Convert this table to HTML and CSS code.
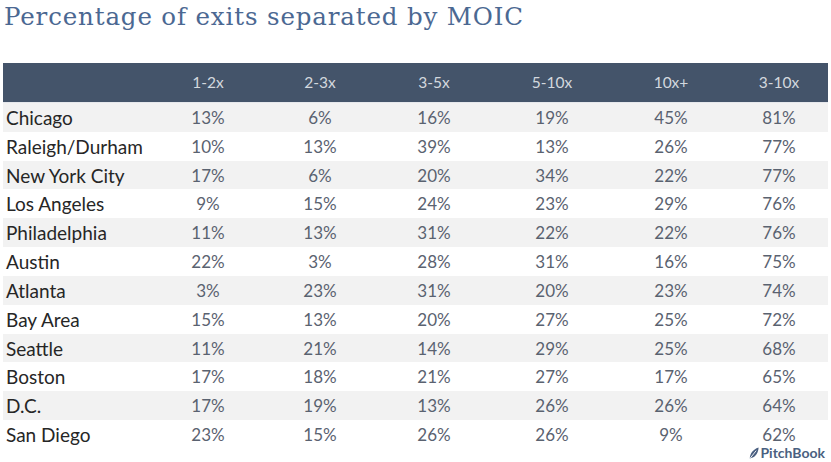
FILE: index.html
```html
<!DOCTYPE html>
<html>
<head>
<meta charset="utf-8">
<link rel="stylesheet" href="styles.css">
</head>
<body>
<div class="page">
  <h1 class="title">Percentage of exits separated by MOIC</h1>
  <div class="table">
    <div class="row head">
      <div class="city"></div><div>1-2x</div><div>2-3x</div><div>3-5x</div><div>5-10x</div><div>10x+</div><div>3-10x</div>
    </div>
    <div class="row odd"><div class="city">Chicago</div><div>13%</div><div>6%</div><div>16%</div><div>19%</div><div>45%</div><div>81%</div></div>
    <div class="row"><div class="city">Raleigh/Durham</div><div>10%</div><div>13%</div><div>39%</div><div>13%</div><div>26%</div><div>77%</div></div>
    <div class="row odd"><div class="city">New York City</div><div>17%</div><div>6%</div><div>20%</div><div>34%</div><div>22%</div><div>77%</div></div>
    <div class="row"><div class="city">Los Angeles</div><div>9%</div><div>15%</div><div>24%</div><div>23%</div><div>29%</div><div>76%</div></div>
    <div class="row odd"><div class="city">Philadelphia</div><div>11%</div><div>13%</div><div>31%</div><div>22%</div><div>22%</div><div>76%</div></div>
    <div class="row"><div class="city">Austin</div><div>22%</div><div>3%</div><div>28%</div><div>31%</div><div>16%</div><div>75%</div></div>
    <div class="row odd"><div class="city">Atlanta</div><div>3%</div><div>23%</div><div>31%</div><div>20%</div><div>23%</div><div>74%</div></div>
    <div class="row"><div class="city">Bay Area</div><div>15%</div><div>13%</div><div>20%</div><div>27%</div><div>25%</div><div>72%</div></div>
    <div class="row odd"><div class="city">Seattle</div><div>11%</div><div>21%</div><div>14%</div><div>29%</div><div>25%</div><div>68%</div></div>
    <div class="row"><div class="city">Boston</div><div>17%</div><div>18%</div><div>21%</div><div>27%</div><div>17%</div><div>65%</div></div>
    <div class="row odd"><div class="city">D.C.</div><div>17%</div><div>19%</div><div>13%</div><div>26%</div><div>26%</div><div>64%</div></div>
    <div class="row"><div class="city">San Diego</div><div>23%</div><div>15%</div><div>26%</div><div>26%</div><div>9%</div><div>62%</div></div>
  </div>
  <div class="brand">
    <svg class="leaf" width="10" height="12" viewBox="0 0 10 12"><path d="M0.8 11.5 C1 7 3.5 2.5 9.6 0.5 C9.4 5.5 6.8 10 2.2 11 Z" fill="#4a5f80"/><path d="M1.2 11.2 L7.2 3.6" stroke="#fff" stroke-width="0.9"/></svg>
    <span>PitchBook</span>
  </div>
</div>
</body>
</html>
```

FILE: styles.css
```css
html, body {
  margin: 0;
  padding: 0;
  background: #ffffff;
}
.page {
  width: 831px;
  height: 462px;
  overflow: hidden;
}
.title {
  margin: 0;
  padding: 0 0 0 4px;
  height: 63px;
  font-family: "DejaVu Serif", "Liberation Serif", serif;
  font-weight: normal;
  font-size: 24.5px;
  line-height: 33px;
  color: #4b6892;
  letter-spacing: 0.85px;
  white-space: nowrap;
}
.table {
  margin-left: 3px;
  width: 825px;
  font-family: Lato, "Noto Sans", sans-serif;
}
.row {
  display: grid;
  grid-template-columns: 149px 112px 112px 116px 120px 118px 98px;
  height: 28.83px;
  align-items: center;
  font-size: 17px;
  line-height: 1;
  color: #5a6270;
}
.row > div {
  text-align: center;
}
.row > .city {
  text-align: left;
  padding-left: 3px;
  font-size: 19px;
  color: #262626;
}
.row.odd {
  background: #f2f2f2;
}
.row.head {
  height: 39px;
  background: #44546a;
  color: #d3d8de;
  font-size: 15.5px;
  border-bottom: 1px solid #e6e8ec;
}
.brand {
  display: flex;
  justify-content: flex-end;
  align-items: center;
  gap: 1px;
  margin-top: -3px;
  padding-right: 6px;
  font-family: Lato, "Noto Sans", sans-serif;
  font-weight: bold;
  font-size: 14px;
  color: #4a5f80;
  line-height: 14px;
}
.leaf {
  display: block;
}
```
